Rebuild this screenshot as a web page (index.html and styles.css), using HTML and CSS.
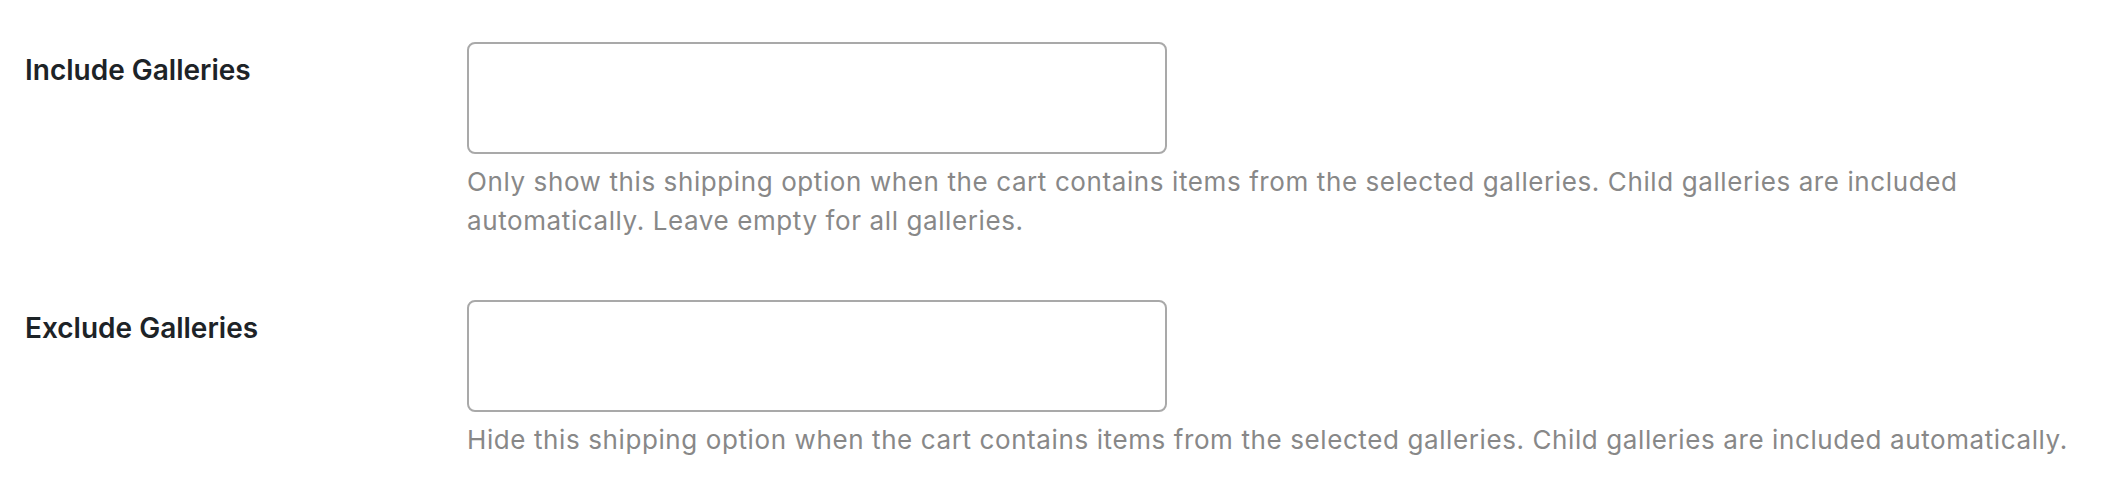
FILE: index.html
```html
<!DOCTYPE html>
<html lang="en">

<head>
    <meta charset="UTF-8">
    <meta name="viewport" content="width=device-width, initial-scale=1.0">
    <title>Shipping Option Galleries</title>
    <link rel="stylesheet" href="styles.css">
</head>

<body>
    <div class="form-table">
        <div class="form-row">
            <label class="field-label" for="includeGalleries">Include Galleries</label>
            <div class="field">
                <div class="select-box" id="includeGalleries"></div>
                <p class="description">Only show this shipping option when the cart contains items from the selected galleries. Child galleries are included automatically. Leave empty for all galleries.</p>
            </div>
        </div>
        <div class="form-row">
            <label class="field-label" for="excludeGalleries">Exclude Galleries</label>
            <div class="field">
                <div class="select-box" id="excludeGalleries"></div>
                <p class="description">Hide this shipping option when the cart contains items from the selected galleries. Child galleries are included automatically.</p>
            </div>
        </div>
    </div>
</body>

</html>
```

FILE: styles.css
```css
body {
    font-family: Inter, "Noto Sans", sans-serif;
    margin: 0;
    padding: 0;
    background-color: #fff;
}

.form-table {
    padding: 12px 20px 0 25px;
}

.form-row {
    display: grid;
    grid-template-columns: 442px 1fr;
    padding: 30px 0;
}

.field-label {
    font-size: 28px;
    font-weight: 600;
    line-height: 36px;
    color: #1d2327;
    padding-top: 10px;
}

.select-box {
    width: 700px;
    height: 112px;
    box-sizing: border-box;
    border: 2px solid #a9a9a9;
    border-radius: 8px;
    background-color: #fff;
}

.description {
    margin: 8px 0 0 0;
    font-size: 26px;
    line-height: 39px;
    letter-spacing: 0.6px;
    color: #888;
}
```
